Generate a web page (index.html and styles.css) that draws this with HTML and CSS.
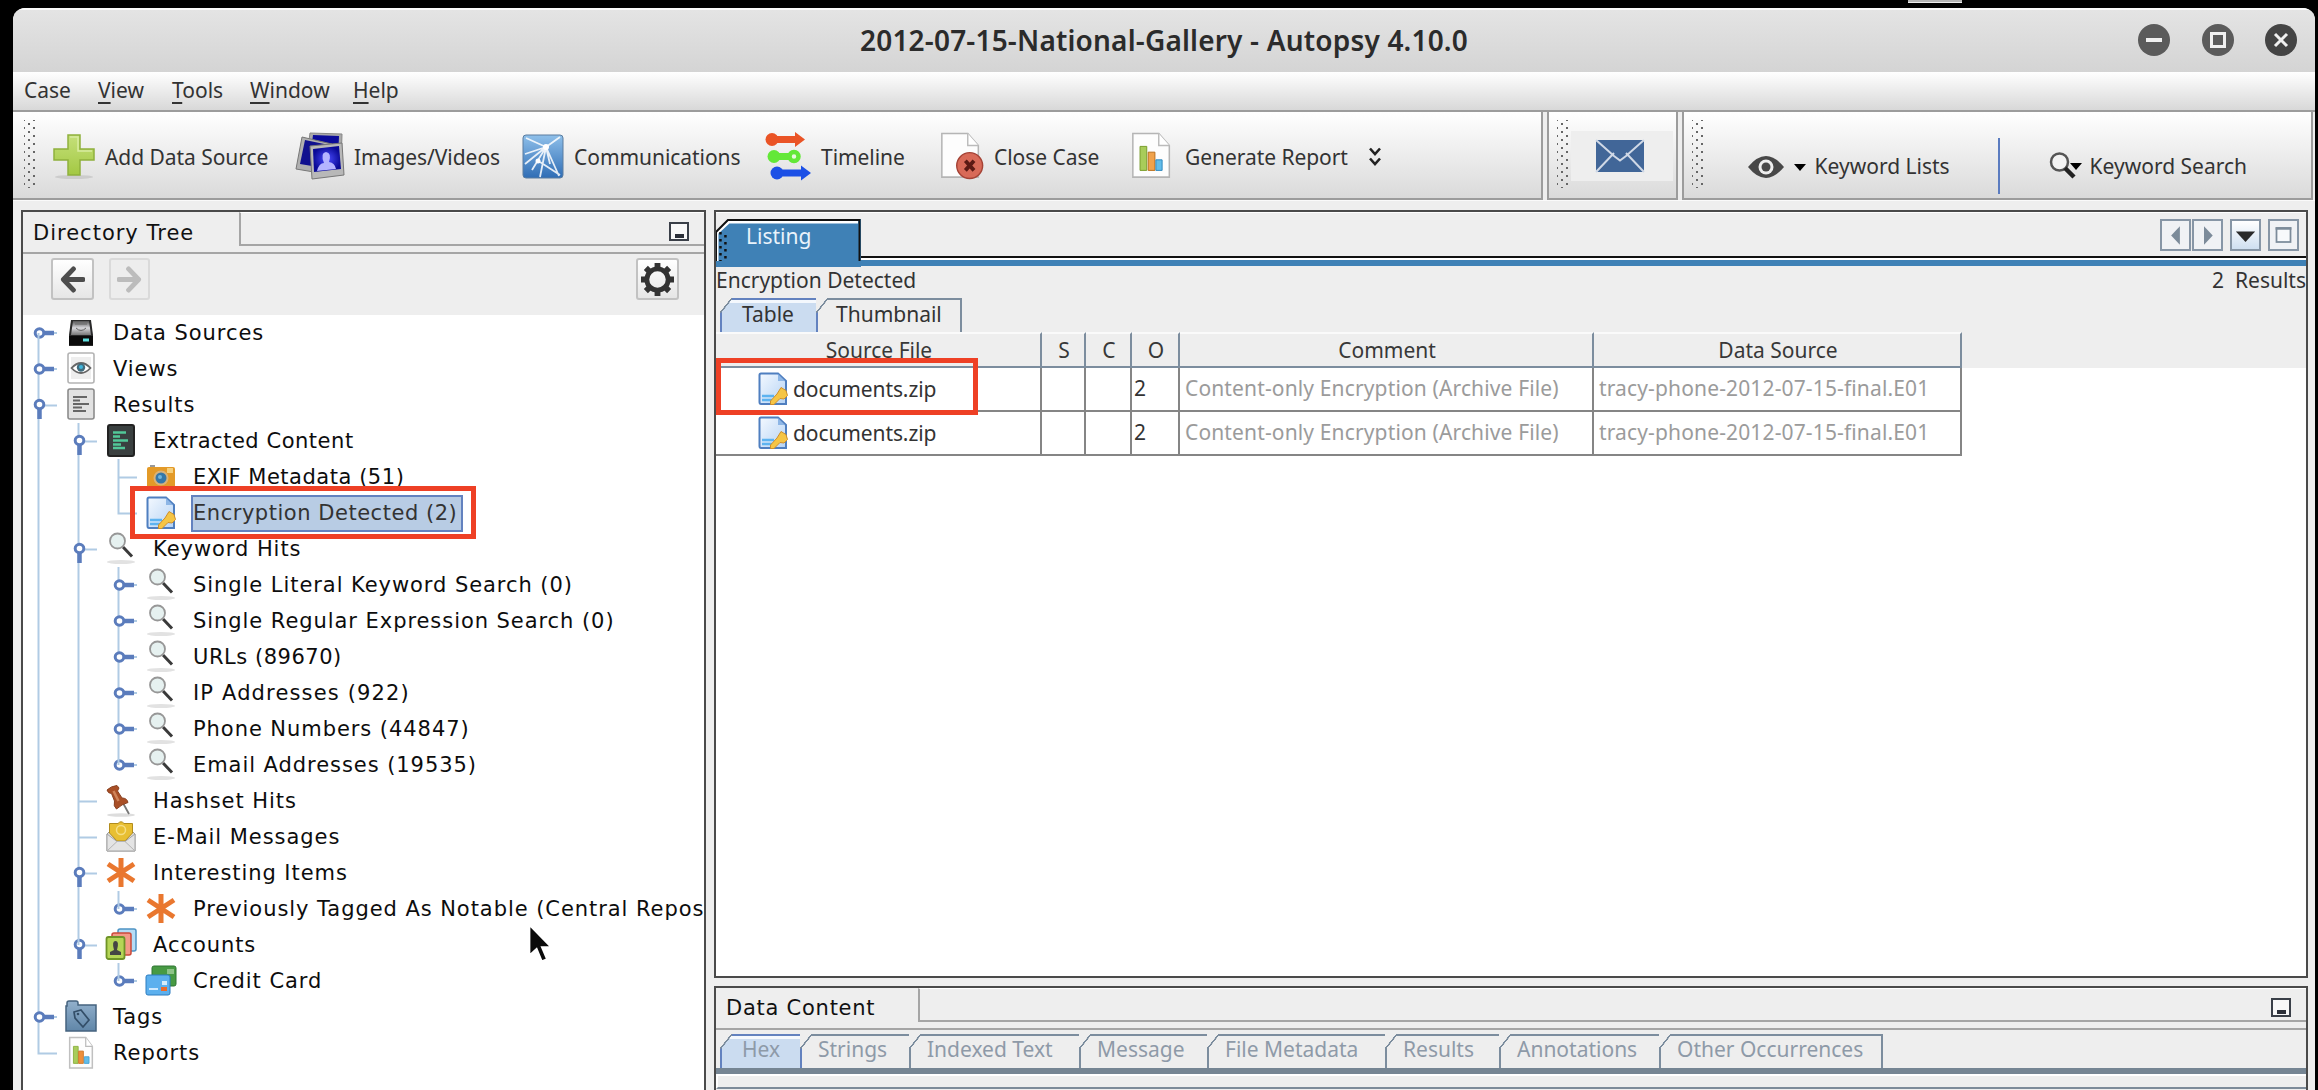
FILE: index.html
```html
<!DOCTYPE html>
<html lang="en">
<head>
<meta charset="utf-8">
<title>2012-07-15-National-Gallery - Autopsy 4.10.0</title>
<link rel="stylesheet" href="styles.css">
</head>
<body>
<svg class="defs" aria-hidden="true">
  <defs>
    <linearGradient id="gBlue" x1="0" y1="0" x2="1" y2="1"><stop offset="0" stop-color="#f4f9ff"/><stop offset="1" stop-color="#b4d2f4"/></linearGradient>
    <linearGradient id="gPlus" x1="0" y1="0" x2="0" y2="1"><stop offset="0" stop-color="#c5e07a"/><stop offset="1" stop-color="#a3c843"/></linearGradient>
    <linearGradient id="gComm" x1="0" y1="0" x2="0" y2="1"><stop offset="0" stop-color="#8fc0ea"/><stop offset="1" stop-color="#2f6db5"/></linearGradient>
    <linearGradient id="gFolder" x1="0" y1="0" x2="0" y2="1"><stop offset="0" stop-color="#92b0cc"/><stop offset="1" stop-color="#6086a8"/></linearGradient>
    <radialGradient id="gPic"><stop offset="0" stop-color="#4a4cff"/><stop offset="1" stop-color="#0a0a96"/></radialGradient>
    <linearGradient id="gDisk" x1="0" y1="0" x2="0" y2="1"><stop offset="0" stop-color="#555"/><stop offset=".5" stop-color="#d8d8dc"/><stop offset="1" stop-color="#777"/></linearGradient>
  </defs>
  <symbol id="g-line" viewBox="0 0 40 36" preserveAspectRatio="none"><path class="guide" d="M15.5 0V36"/></symbol>
  <symbol id="g-tee" viewBox="0 0 40 36" preserveAspectRatio="none"><path class="guide" d="M15.5 0V36M15.5 18.500H34"/></symbol>
  <symbol id="g-end" viewBox="0 0 40 36" preserveAspectRatio="none"><path class="guide" d="M15.500 0V18.500H34"/></symbol>
  <symbol id="g-closed" viewBox="0 0 40 36"><path class="guide" d="M28 18H34"/><path class="knob" d="M21 18H31"/><circle class="ring" cx="16.500" cy="18" r="4.300"/></symbol>
  <symbol id="g-open" viewBox="0 0 40 36"><path class="guide" d="M22 18.500H34"/><path class="knob" d="M16.500 22V32"/><circle class="ring" cx="16.500" cy="17.500" r="4.300"/></symbol>
  <symbol id="i-disk" viewBox="0 0 32 34"><path d="M6 4H26L28 19V30H4V19Z" fill="#2a2a2a"/><path d="M8 5H24L26 19H6Z" fill="url(#gDisk)"/><path d="M10 8H22M11 12q5 5 10 0" stroke="#666" fill="none"/><path d="M4 20H28V29H4Z" fill="#0b0b0b"/><path d="M18 24h6" stroke="#5fe0e0" stroke-width="3"/></symbol>
  <symbol id="i-views" viewBox="0 0 32 34"><rect x="3" y="1" width="26" height="30" rx="2" fill="#fff" stroke="#b4b4b4" stroke-width="1.600"/><rect x="6" y="5" width="20" height="22" fill="#eee"/><path d="M6.500 16Q16 6 25.500 16Q16 26 6.500 16Z" fill="#fff" stroke="#666" stroke-width="1.800"/><circle cx="16" cy="15.500" r="4.200" fill="#426b7c"/><circle cx="16" cy="15" r="2" fill="#3fb6dc"/></symbol>
  <symbol id="i-results" viewBox="0 0 32 34"><rect x="3" y="1" width="26" height="30" rx="2" fill="#e2e2e2" stroke="#8c8c8c" stroke-width="1.600"/><path d="M8 9H22M8 12.500H15M8 16H24M8 19.500H17M8 23H21" stroke="#666" stroke-width="2.200"/></symbol>
  <symbol id="i-extract" viewBox="0 0 32 34"><rect x="3" y="1" width="26" height="31" rx="2" fill="#3a4040" stroke="#222" stroke-width="2"/><path d="M8 8.500H21M8 12.500H15M8 16.500H23M8 20.500H16M8 24H20" stroke="#52c898" stroke-width="2.400"/></symbol>
  <symbol id="i-exif" viewBox="0 0 32 34"><path d="M5 8V5h5v3" fill="#999"/><rect x="2" y="7" width="28" height="22" rx="2" fill="#e39a28"/><rect x="22" y="8" width="6" height="5" fill="#f5cf7c"/><circle cx="16" cy="18" r="7.500" fill="#d9b27a"/><circle cx="16" cy="18" r="5.500" fill="#3577a8"/><circle cx="15" cy="17" r="2" fill="#70b5dc"/></symbol>
  <symbol id="i-enc" viewBox="0 0 32 34"><path d="M4 1.500H21L29 9V32H4Q2.500 32 2.500 30V3Q2.500 1.500 4 1.500Z" fill="url(#gBlue)" stroke="#4f7fc0" stroke-width="2"/><path d="M21 2V9H28" fill="#8db6e6"/><path d="M5 24H17M5 28H15" stroke="#5db3f0" stroke-width="2.500"/><path d="M24 15.500l5 3 1.500 5-3.500 3.500-4-.5-6 6h-3.500v-3.500l6.500-7z" fill="#f5c545" stroke="#cf8f2a" stroke-width="1"/></symbol>
  <symbol id="i-mag" viewBox="0 0 32 34"><ellipse cx="16" cy="30" rx="14" ry="2" fill="#e2e2e2"/><path d="M18 15L27 24.500" stroke="#3a3a3a" stroke-width="3"/><circle cx="12.500" cy="9" r="7.500" fill="#e6f1f0" stroke="#979797" stroke-width="1.800"/></symbol>
  <symbol id="i-pin" viewBox="0 0 32 34"><ellipse cx="16" cy="31" rx="14" ry="1.800" fill="#ddd"/><path d="M18 19L24 30" stroke="#777" stroke-width="1.800"/><path d="M2 6Q6 2 12 1.500L14 4 12.500 7 17 14Q22 14 23 18.500Q17 20 11.500 25Q8 22 9.500 17L6.500 9.500Q3 9.500 2 6Z" fill="#a94f26" stroke="#8a4222"/><path d="M8.500 7l5 10" stroke="#d0845a" stroke-width="2.500"/></symbol>
  <symbol id="i-mail" viewBox="0 0 32 34"><path d="M2 14L6 10H26L30 14V31H2Z" fill="#dcdcdc" stroke="#999"/><path d="M4.500 3.500H13Q16 0 19 3.500H27.500V13L20 21H12L4.500 13Z" fill="#e8bf33" stroke="#b28c1c"/><circle cx="16" cy="10" r="4.500" fill="none" stroke="#f5de84" stroke-width="1.500"/><path d="M2 14L12 21.500H20L30 14V31H2Z" fill="#e4e4e4" stroke="#a5a5a5"/><path d="M2.500 30.500L12 21.500H20L29.500 30.500" fill="none" stroke="#b5b5b5"/></symbol>
  <symbol id="i-star" viewBox="0 0 32 34"><path d="M16 2V31M3 8L29 25M29 8L3 25" stroke="#e9772f" stroke-width="5"/></symbol>
  <symbol id="i-accounts" viewBox="0 0 32 34"><rect x="13" y="1" width="18" height="22" rx="2" fill="#b5dcf5" stroke="#4d93c4" stroke-width="1.500"/><rect x="7" y="5" width="19" height="22" rx="2" fill="#f39a87" stroke="#cb4a3a" stroke-width="1.500"/><rect x="1.500" y="9" width="18" height="22" rx="2" fill="#b5d556" stroke="#6f9427" stroke-width="1.800"/><path d="M5 27V24L9 22Q6.500 13 10.500 13Q14.500 13 12 22L16 24V27Z" fill="#444"/></symbol>
  <symbol id="i-card" viewBox="0 0 32 34"><rect x="7" y="2" width="24" height="20" rx="2" fill="#479a43" stroke="#2f7533"/><path d="M22 5h7v5h-7z" fill="#8ec488"/><rect x="1" y="11" width="24" height="20" rx="2" fill="#5cb0ee" stroke="#2c7cc0"/><path d="M4 25h9" stroke="#cfeaff" stroke-width="2"/><path d="M17 17h5v4h-5z" fill="#d4ecfa"/><path d="M16 23h6v4h-6z" fill="#eb6a2a"/></symbol>
  <symbol id="i-tags" viewBox="0 0 32 34"><path d="M2 6V3Q2 1 4 1H11Q13 1 13 3V5H31V31H1V6Z" fill="url(#gFolder)" stroke="#45637f" stroke-width="1.500"/><path d="M9 12l7-2 8 10-6 7-8-9z" fill="none" stroke="#334e68" stroke-width="1.700"/><circle cx="13" cy="14" r="1.300" fill="#334e68"/></symbol>
  <symbol id="i-report" viewBox="0 0 32 36"><path d="M4 1.500H21L28 11V34H4Z" fill="#fdfdfd" stroke="#c0c0c0" stroke-width="1.600"/><path d="M21 1.500V11H28" fill="#fff" stroke="#bbb" stroke-width="1.300"/><path d="M8 11h5v18H8z" fill="#a8cc5a" stroke="#8db143"/><path d="M13.500 16h5v13h-5z" fill="#ee8f3c" stroke="#d07a2a"/><path d="M19.500 22h5v7h-5z" fill="#62bdea" stroke="#4aa5d4"/></symbol>
</svg>

<div class="desktop">
<i class="stray"></i>
<div class="window">
  <header class="titlebar">
    <h1>2012-07-15-National-Gallery - Autopsy 4.10.0</h1>
    <div class="winbtns">
      <svg viewBox="0 0 32 32"><circle cx="16" cy="16" r="16" fill="#5b5b5b"/><path d="M8 16H24" stroke="#f0f0f0" stroke-width="4"/></svg>
      <svg viewBox="0 0 32 32"><circle cx="16" cy="16" r="16" fill="#5b5b5b"/><rect x="9.500" y="9.500" width="13" height="13" fill="none" stroke="#f0f0f0" stroke-width="3"/></svg>
      <svg viewBox="0 0 32 32"><circle cx="16" cy="16" r="16" fill="#444"/><path d="M10 10L22 22M22 10L10 22" stroke="#f0f0f0" stroke-width="3"/></svg>
    </div>
  </header>
  <nav class="menubar"><span style="width:74px">Case</span><span style="width:74px"><u>V</u>iew</span><span style="width:78px"><u>T</u>ools</span><span style="width:103px"><u>W</u>indow</span><span><u>H</u>elp</span></nav>

  <div class="toolbars">
    <div class="bar bar-main">
      <i class="grip"></i>
      <div class="tool" style="width:243px"><svg class="ic" style="width:42px" viewBox="0 0 42 48"><ellipse cx="21" cy="45" rx="19" ry="2" fill="#ccc"/><path d="M15 3H27V17H41V28H27V43H15V28H1V17H15Z" fill="url(#gPlus)" stroke="#8fb03c" stroke-width="1.500"/><path d="M17 5H25V19H39" fill="none" stroke="#d8ecA0" stroke-width="1.500"/></svg><span class="lb">Add Data Source</span></div>
      <div class="tool" style="width:226px"><svg class="ic" style="width:48px" viewBox="0 0 48 48"><path d="M14 1L46 2 45 34 10 30Z" fill="#aaa" stroke="#888"/><path d="M17 3L43 4 42 28 14 26Z" fill="#0b0b9a"/><path d="M6 5L36 12 30 42 0 37Z" fill="#b0b0b0" stroke="#777"/><path d="M9 8L33 13 28 36 4 32Z" fill="#10108f"/><path d="M14 14L46 11 48 43 16 47Z" fill="#b8b8b8" stroke="#777"/><path d="M17 17L43 14 45 37 18 40Z" fill="url(#gPic)"/><path d="M21 39Q23 31 28 31Q24 21 30 20Q36 21 33 30Q39 31 40 37Z" fill="#b4b4ff"/></svg><span class="lb">Images/Videos</span></div>
      <div class="tool" style="width:243px"><svg class="ic" style="width:42px" viewBox="0 0 42 48"><rect x="1" y="3" width="40" height="43" rx="3" fill="url(#gComm)" stroke="#5a7da0"/><path d="M24 15L4 6M24 15L38 5M24 15L3 32M24 15L18 45M3 22L24 15 37 44M18 30L38 43M10 38L24 15L28 32" fill="none" stroke="#fff" stroke-width="1.800" opacity=".85"/><circle cx="24" cy="15" r="3" fill="#fff"/><circle cx="16" cy="29" r="2.500" fill="#fff"/></svg><span class="lb">Communications</span></div>
      <div class="tool" style="width:175px"><svg class="ic" style="width:46px" viewBox="0 0 46 48"><g stroke-width="7"><path d="M6 7.500H32" stroke="#ea5426"/><circle cx="7" cy="7.500" r="6.500" fill="#ea5426"/><path d="M30 0l10 7.500-10 7.500z" fill="#ea5426"/><path d="M9 24.500H26" stroke="#63e838"/><circle cx="9" cy="24.500" r="6.500" fill="#63e838"/><circle cx="29" cy="24.500" r="4.500" fill="#e8f8e0" stroke="#63e838" stroke-width="4.500"/><path d="M12 41H38" stroke="#1c50e6"/><circle cx="12" cy="41" r="6.500" fill="#1c50e6"/><path d="M36 33.500l10 7.500-10 7.500z" fill="#1c50e6"/></g></svg><span class="lb">Timeline</span></div>
      <div class="tool" style="width:191px"><svg class="ic" style="width:44px" viewBox="0 0 44 50"><path d="M1 1.500H28L39 14V47H1Z" fill="#fdfdfd" stroke="#b5b5b5" stroke-width="1.600"/><path d="M28 1.500V14H39" fill="#fff" stroke="#bbb" stroke-width="1.500"/><circle cx="30" cy="35" r="13.500" fill="#d86a58" stroke="#a54336" stroke-width="1.500"/><path d="M25.500 30L34.500 40M34.500 30L25.500 40" stroke="#5c1a14" stroke-width="4"/></svg><span class="lb">Close Case</span></div>
      <div class="tool"><svg class="ic" style="width:44px" viewBox="0 0 44 50"><path d="M1 1.500H28L39 14V47H1Z" fill="#fdfdfd" stroke="#b5b5b5" stroke-width="1.600"/><path d="M28 1.500V14H39" fill="#fff" stroke="#bbb" stroke-width="1.500"/><path d="M8.500 15h7v25h-7z" fill="#a8cc5a" stroke="#769c28"/><path d="M17 21h7v19h-7z" fill="#f0a24c" stroke="#b86d1a"/><path d="M25 29h6.500v11h-6.500z" fill="#62bdea" stroke="#2d87bd"/></svg><span class="lb">Generate Report</span></div>
      <svg class="chev" viewBox="0 0 14 20"><path d="M2 1.500L7 7 12 1.500M2 11.500L7 17 12 11.500" fill="none" stroke="#222" stroke-width="2.600"/></svg>
    </div>
    <div class="bar bar-mail"><i class="grip"></i><div class="mailbtn"><svg width="50" height="34" viewBox="0 0 50 34"><rect x="1" y="1" width="48" height="32" rx="2" fill="#416698"/><path d="M1 1L19 17 25 21.500 31 17 49 1M1 33L19 14M49 33L31 14" fill="none" stroke="#cfd8e6" stroke-width="2"/></svg></div></div>
    <div class="bar bar-kw"><i class="grip"></i>
      <svg class="eye" viewBox="0 0 36 22"><path d="M0 11Q18 -11 36 11Q18 33 0 11Z" fill="#484848"/><circle cx="18" cy="11" r="7.500" fill="#eee"/><circle cx="18" cy="11" r="4.500" fill="#484848"/></svg>
      <i class="caret"></i><span class="lb kl">Keyword Lists</span><i class="vsep"></i>
      <svg class="srch" viewBox="0 0 34 28"><circle cx="10.500" cy="11" r="8.500" fill="#f3f3f3" stroke="#555" stroke-width="2.500"/><path d="M16 17L25 26" stroke="#222" stroke-width="4.500"/><path d="M21 12H33L27 19Z" fill="#000"/></svg>
      <span class="lb ks">Keyword Search</span>
    </div>
  </div>

  <main class="work">
    <section class="panel left">
      <div class="phead"><div class="ptitle">Directory Tree</div><div class="pfill"><i class="minbtn"></i></div></div>
      <div class="ptools">
        <button class="btn"><svg viewBox="0 0 26 28"><path d="M24 14H4M14 3L3.500 14 14 25" fill="none" stroke="#4d4d4d" stroke-width="5" stroke-linecap="round" stroke-linejoin="round"/></svg></button>
        <button class="btn off"><svg viewBox="0 0 26 28"><path d="M2 14H22M12 3L22.500 14 12 25" fill="none" stroke="#bcbcbc" stroke-width="5" stroke-linecap="round" stroke-linejoin="round"/></svg></button>
        <button class="btn gear"><svg viewBox="0 0 34 34"><circle cx="17" cy="17" r="11" fill="none" stroke="#333" stroke-width="5"/><path d="M17 0V6M17 28V34M0 17H6M28 17H34M5 5L9 9M25 25L29 29M29 5L25 9M9 25L5 29" stroke="#333" stroke-width="6"/></svg></button>
      </div>
      <div class="tree">
        <div class="row first"><span class="g"><svg class="half low"><use href="#g-line"/></svg><svg><use href="#g-closed"/></svg></span><svg class="ti"><use href="#i-disk"/></svg><b>Data Sources</b></div>
        <div class="row"><span class="g"><svg><use href="#g-line"/></svg><svg><use href="#g-closed"/></svg></span><svg class="ti"><use href="#i-views"/></svg><b>Views</b></div>
        <div class="row"><span class="g"><svg><use href="#g-line"/></svg><svg><use href="#g-open"/></svg></span><svg class="ti"><use href="#i-results"/></svg><b>Results</b></div>
        <div class="row"><span class="g"><svg><use href="#g-line"/></svg></span><span class="g"><svg><use href="#g-line"/></svg><svg><use href="#g-open"/></svg></span><svg class="ti"><use href="#i-extract"/></svg><b class="tight">Extracted Content</b></div>
        <div class="row"><span class="g"><svg><use href="#g-line"/></svg></span><span class="g"><svg><use href="#g-line"/></svg></span><span class="g"><svg><use href="#g-tee"/></svg></span><svg class="ti"><use href="#i-exif"/></svg><b class="tight">EXIF Metadata (51)</b></div>
        <div class="row"><span class="g"><svg><use href="#g-line"/></svg></span><span class="g"><svg><use href="#g-line"/></svg></span><span class="g"><svg><use href="#g-end"/></svg></span><svg class="ti"><use href="#i-enc"/></svg><b class="sel tight">Encryption Detected (2)</b></div>
        <div class="row"><span class="g"><svg><use href="#g-line"/></svg></span><span class="g"><svg><use href="#g-line"/></svg><svg><use href="#g-open"/></svg></span><svg class="ti"><use href="#i-mag"/></svg><b>Keyword Hits</b></div>
        <div class="row"><span class="g"><svg><use href="#g-line"/></svg></span><span class="g"><svg><use href="#g-line"/></svg></span><span class="g"><svg><use href="#g-line"/></svg><svg><use href="#g-closed"/></svg></span><svg class="ti"><use href="#i-mag"/></svg><b>Single Literal Keyword Search (0)</b></div>
        <div class="row"><span class="g"><svg><use href="#g-line"/></svg></span><span class="g"><svg><use href="#g-line"/></svg></span><span class="g"><svg><use href="#g-line"/></svg><svg><use href="#g-closed"/></svg></span><svg class="ti"><use href="#i-mag"/></svg><b>Single Regular Expression Search (0)</b></div>
        <div class="row"><span class="g"><svg><use href="#g-line"/></svg></span><span class="g"><svg><use href="#g-line"/></svg></span><span class="g"><svg><use href="#g-line"/></svg><svg><use href="#g-closed"/></svg></span><svg class="ti"><use href="#i-mag"/></svg><b class="tight">URLs (89670)</b></div>
        <div class="row"><span class="g"><svg><use href="#g-line"/></svg></span><span class="g"><svg><use href="#g-line"/></svg></span><span class="g"><svg><use href="#g-line"/></svg><svg><use href="#g-closed"/></svg></span><svg class="ti"><use href="#i-mag"/></svg><b class="wide">IP Addresses (922)</b></div>
        <div class="row"><span class="g"><svg><use href="#g-line"/></svg></span><span class="g"><svg><use href="#g-line"/></svg></span><span class="g"><svg><use href="#g-line"/></svg><svg><use href="#g-closed"/></svg></span><svg class="ti"><use href="#i-mag"/></svg><b>Phone Numbers (44847)</b></div>
        <div class="row"><span class="g"><svg><use href="#g-line"/></svg></span><span class="g"><svg><use href="#g-line"/></svg></span><span class="g"><svg class="half"><use href="#g-line"/></svg><svg><use href="#g-closed"/></svg></span><svg class="ti"><use href="#i-mag"/></svg><b>Email Addresses (19535)</b></div>
        <div class="row"><span class="g"><svg><use href="#g-line"/></svg></span><span class="g"><svg><use href="#g-tee"/></svg></span><svg class="ti"><use href="#i-pin"/></svg><b>Hashset Hits</b></div>
        <div class="row"><span class="g"><svg><use href="#g-line"/></svg></span><span class="g"><svg><use href="#g-tee"/></svg></span><svg class="ti"><use href="#i-mail"/></svg><b>E-Mail Messages</b></div>
        <div class="row"><span class="g"><svg><use href="#g-line"/></svg></span><span class="g"><svg><use href="#g-line"/></svg><svg><use href="#g-open"/></svg></span><svg class="ti"><use href="#i-star"/></svg><b>Interesting Items</b></div>
        <div class="row"><span class="g"><svg><use href="#g-line"/></svg></span><span class="g"><svg><use href="#g-line"/></svg></span><span class="g"><svg class="half"><use href="#g-line"/></svg><svg><use href="#g-closed"/></svg></span><svg class="ti"><use href="#i-star"/></svg><b>Previously Tagged As Notable (Central Repos</b></div>
        <div class="row"><span class="g"><svg><use href="#g-line"/></svg></span><span class="g"><svg class="half"><use href="#g-line"/></svg><svg><use href="#g-open"/></svg></span><svg class="ti"><use href="#i-accounts"/></svg><b>Accounts</b></div>
        <div class="row"><span class="g"><svg><use href="#g-line"/></svg></span><span class="g"></span><span class="g"><svg class="half"><use href="#g-line"/></svg><svg><use href="#g-closed"/></svg></span><svg class="ti"><use href="#i-card"/></svg><b>Credit Card</b></div>
        <div class="row"><span class="g"><svg><use href="#g-line"/></svg><svg><use href="#g-closed"/></svg></span><svg class="ti"><use href="#i-tags"/></svg><b>Tags</b></div>
        <div class="row"><span class="g"><svg><use href="#g-end"/></svg></span><svg class="ti"><use href="#i-report"/></svg><b>Reports</b></div>
      </div>
    </section>

    <div class="rightcol">
      <section class="panel listing">
        <div class="ltabs">
          <div class="ltab"><svg viewBox="0 0 146 48" preserveAspectRatio="none"><path d="M0 48V13L12 0H146V48Z" fill="#3f81b6"/><path d="M0 0H12L0 13Z" fill="#eee"/><path d="M1 42V14L13 3H143" fill="none" stroke="#fff" stroke-width="3"/><path d="M0 42V13L12 1H144.500V42" fill="none" stroke="#111" stroke-width="2"/><path d="M4.500 13V42M9.500 16V40" stroke="#111" stroke-width="2.500" stroke-dasharray="2.500 4.500"/></svg><span>Listing</span></div>
          <div class="lfill">
            <i class="nb"><svg viewBox="0 0 30 32"><path d="M20 6V27L10 16.500Z" fill="#7c8b9a"/></svg></i><i class="nb"><svg viewBox="0 0 30 32"><path d="M11 6V27L21 16.500Z" fill="#7c8b9a"/></svg></i><i class="nb dd"><svg viewBox="0 0 30 32"><path d="M4 12H26L15 24Z" fill="#2a2a2a"/></svg></i><i class="nb mx"><svg viewBox="0 0 30 32"><rect x="7" y="8" width="16" height="16" fill="#f7f9fb" stroke="#7c8b9a" stroke-width="2"/><path d="M6 8.500H24" stroke="#7c8b9a" stroke-width="3"/></svg></i>
          </div>
        </div>
        <div class="strip"></div>
        <div class="info"><span>Encryption Detected</span><span class="cnt">2&nbsp; Results</span></div>
        <div class="tabs up">
          <div class="tab on" style="width:98px"><span>Table</span></div><div class="tab" style="width:144px"><span style="padding-left:18px">Thumbnail</span></div>
        </div>
        <div class="tbl head"><div>Source File</div><div>S</div><div>C</div><div>O</div><div>Comment</div><div>Data Source</div></div>
        <div class="tbl"><div class="file"><svg class="ti"><use href="#i-enc"/></svg>documents.zip</div><div></div><div></div><div class="o">2</div><div class="dim cm">Content-only Encryption (Archive File)</div><div class="dim ds">tracy-phone-2012-07-15-final.E01</div></div>
        <div class="tbl"><div class="file"><svg class="ti"><use href="#i-enc"/></svg>documents.zip</div><div></div><div></div><div class="o">2</div><div class="dim cm">Content-only Encryption (Archive File)</div><div class="dim ds">tracy-phone-2012-07-15-final.E01</div></div>
      </section>
      <section class="panel content">
        <div class="phead"><div class="ptitle">Data Content</div><div class="pfill"><i class="minbtn"></i></div></div>
        <div class="tabs down">
          <div class="tab on" style="width:82px"><span>Hex</span></div><div class="tab" style="width:109px"><span>Strings</span></div><div class="tab" style="width:170px"><span>Indexed Text</span></div><div class="tab" style="width:128px"><span>Message</span></div><div class="tab" style="width:178px"><span>File Metadata</span></div><div class="tab" style="width:114px"><span>Results</span></div><div class="tab" style="width:160px"><span>Annotations</span></div><div class="tab" style="width:222px"><span>Other Occurrences</span></div>
        </div>
        <div class="slate"></div><div class="inner"></div>
      </section>
    </div>
  </main>
</div>
<i class="mark m1"></i><i class="mark m2"></i>
<svg class="cursor" viewBox="0 0 24 38"><path d="M2 2V30L8.500 24 13 35 18 33 13.500 22.500H22Z" fill="#0a0a0a" stroke="#fff" stroke-width="2"/></svg>
</div>
</body>
</html>
```
FILE: styles.css
```css
* { box-sizing: border-box; }
body { margin: 0; background: #000; font-family: "Noto Sans", sans-serif; font-size: 21px; color: #333; }
i { font-style: normal; }
b { font-weight: 400; }
svg { display: block; }
.defs { position: absolute; width: 0; height: 0; }
.desktop { position: relative; width: 2318px; height: 1090px; padding: 8px 3px 0 13px; overflow: hidden; white-space: nowrap; }
.stray { position: absolute; left: 1908px; top: 0; width: 54px; height: 3px; background: #b5b5b5; border-bottom: 1px solid #eee; }
.window { height: 1082px; display: flex; flex-direction: column; background: #eee; border-radius: 12px 12px 0 0; overflow: hidden; }

.titlebar { flex: none; position: relative; height: 64px; display: flex; align-items: center; justify-content: center; padding-bottom: 2px; background: linear-gradient(#e4e4e4, #d4d4d4); border-top: 2px solid #fafafa; }
h1 { margin: 0; font-size: 28px; font-weight: 600; letter-spacing: .18px; color: #2b2b2b; }
.winbtns { position: absolute; right: 18px; top: 14px; display: flex; gap: 31.500px; }
.winbtns svg { width: 32px; height: 32px; }
.menubar { flex: none; height: 40px; padding-left: 11px; display: flex; align-items: center; line-height: 37px; background: linear-gradient(#fff, #d8d8d8); border-bottom: 2px solid #9c9c9c; }
.menubar span { padding-bottom: 1px; }
u { text-underline-offset: 4px; text-decoration-thickness: 2px; text-decoration-skip-ink: none; }

.toolbars { flex: none; height: 88px; display: flex; gap: 4px; padding-right: 2px; }
.bar { height: 88px; display: flex; align-items: center; padding-bottom: 2px; border: solid #9c9c9c; border-width: 0 2px 2px; background: linear-gradient(#fff, #dadada); }
.bar-main { width: 1531px; border-left-width: 0; }
.bar-mail { width: 131px; }
.bar-kw { width: 632px; }
.grip { flex: none; width: 12px; height: 68px; margin-left: 8px; background: radial-gradient(circle, #666 1.100px, transparent 1.500px) 0 0 / 10px 8px, radial-gradient(circle, #666 1.100px, transparent 1.500px) 5px 4px / 10px 8px; }
.bar-main .grip { margin: 0 17px 0 11px; }
.tool { flex: none; display: flex; align-items: center; padding-top: 4px; letter-spacing: -.05px; }
.ic { height: 48px; flex: none; margin-right: 10px; overflow: visible; }
.lb { padding-top: 1px; }
.chev { width: 14px; height: 20px; margin: 5px 0 0 20px; }
.mailbtn { width: 102px; height: 50px; margin: 4px 0 0 2px; display: flex; align-items: center; justify-content: center; background: #eee; padding-right: 4px; }
.eye { width: 36px; height: 22px; margin: 26px 0 0 44px; }
.caret { border: 6px solid transparent; border-top: 7px solid #000; border-bottom: 0; margin: 26px 9px 0 10px; }
.kl { width: 183px; margin-top: 23px; }
.vsep { width: 2px; height: 56px; background: #5b7cc0; margin-top: 24px; }
.srch { width: 34px; height: 28px; margin: 22px 7px 0 49px; }
.ks { margin-top: 23px; }

.work { flex: 1; min-height: 0; display: flex; gap: 8px; padding: 9px 7px 0 8px; border-top: 1px solid #fafafa; }
.panel { border: 2px solid #4a4a4a; overflow: hidden; display: flex; flex-direction: column; background: #eee; }
.left { width: 685px; flex: none; border-bottom: 0; color: #111; }
.left, .content .ptitle { font-family: "DejaVu Sans", sans-serif; }
.phead { flex: none; display: flex; height: 42px; border-bottom: 2px solid #a5a5a5; }
.ptitle { width: 216px; height: 40px; padding-left: 10px; line-height: 42px; letter-spacing: 1px; color: #111; }
.pfill { flex: 1; height: 34px; border-left: 2px solid #a5a5a5; border-bottom: 2px solid #a5a5a5; display: flex; justify-content: flex-end; padding: 9px 15px 0 0; border-top: 1px solid #fff; }
.minbtn { width: 20px; height: 19px; border: 2px solid #3a3f48; background: linear-gradient(#2b2f38, #2b2f38) 4px 10px / 9px 4px no-repeat #f8f8f8; }
.ptools { flex: none; height: 61px; display: flex; padding: 4px 25px 0 28px; }
.btn { width: 43px; height: 42px; padding: 0; margin-right: 15px; display: grid; place-items: center; border: 2px solid #c2c2c2; border-radius: 3px; background: linear-gradient(#fff, #e6e6e6); }
.btn svg { width: 25px; height: 27px; }
.btn.off { border-color: #dadada; background: #ededed; width: 41px; }
.btn.gear { margin: 0 0 0 auto; }
.btn.gear svg { width: 33px; height: 33px; }
.tree { flex: 1; background: #fff; color: #0d0d0d; letter-spacing: .94px; overflow: hidden; }
.tight { letter-spacing: .53px; }
.wide { letter-spacing: 1.150px; }
.row { height: 36px; display: flex; align-items: center; }
.g { flex: none; width: 40px; height: 100%; display: grid; }
.g svg { grid-area: 1 / 1; width: 40px; height: 100%; }
.g .half { clip-path: inset(0 0 50% 0); }
.g .half.low { clip-path: inset(50% 0 0 0); }
.guide { stroke: #b0cbe4; stroke-width: 2; fill: none; }
.knob { stroke: #5b7cbc; stroke-width: 4.500; }
.ring { stroke: #5b7cbc; stroke-width: 3; fill: #fff; }
.ti { flex: none; width: 32px; height: 34px; margin: 0 16px 0 2px; }
.sel { background: #b8cce4; outline: 2px solid #6382bf; outline-offset: 0; padding-right: 4px; height: 33px; line-height: 32px; color: #333; }

.rightcol { flex: 1; min-width: 0; display: flex; flex-direction: column; gap: 8px; }
.listing { height: 768px; background: #fff; }
.ltabs { flex: none; height: 46px; display: flex; background: #eee; padding-top: 6px; border-top: 1px solid #fff; }
.ltab { width: 143px; height: 42px; flex: none; position: relative; z-index: 1; display: grid; }
.ltab > * { grid-area: 1 / 1; }
.ltab svg { width: 145px; height: 48px; }
.ltab span { position: relative; padding-left: 30px; line-height: 35px; color: #eaf3fb; }
.lfill { flex: 1; display: flex; justify-content: flex-end; border-bottom: 2px solid #111; padding-right: 6px; height: 39px; }
.nb { width: 31px; height: 32px; border: 2px solid #8796a6; background: #f0f2f5; margin-right: 1px; }
.nb svg { width: 27px; height: 28px; }
.nb.dd { margin: 0 7px 0 6px; background: linear-gradient(#fff, #cfdff0); }
.strip { flex: none; height: 8px; background: #3f81b6; border-top: 2px solid #fff; position: relative; }
.info { flex: none; height: 32px; line-height: 29px; display: flex; justify-content: space-between; background: #eee; }
.tabs { flex: none; display: flex; background: #eee; padding-left: 4px; }
.tab { position: relative; height: 34px; line-height: 29px; border-top: 2px solid #7c8d9e; border-right: 2px solid #7c8d9e; }
.tab span { display: block; padding-left: 16px; }
.tab::before { content: ""; position: absolute; left: -2px; top: -2px; width: 12px; height: 15px; background: linear-gradient(to bottom right, #eee 46%, #7c8d9e 47%, #7c8d9e 54%, transparent 55%); }
.tab.on { background: #cbdcf0; border-color: #6382bf; border-left: 2px solid #6382bf; box-shadow: inset 0 3px #f4f8fd; }
.tab.on span { padding-left: 20px; }
.tbl { flex: none; display: grid; grid-template-columns: 326px 44px 46px 48px 414px 368px; height: 44px; line-height: 41px; }
.tbl > div { border-right: 2px solid #858585; border-bottom: 2px solid #858585; overflow: hidden; }
.tbl.head { height: 36px; text-align: center; background: #eee; padding-right: 344px; color: #383838; }
.tbl.head > div { border-color: #7c8d9e; border-top: 2px solid #fafafa; line-height: 33px; padding-left: 2px; }
.file { display: flex; align-items: center; padding-left: 39px; letter-spacing: -.1px; }
.file .ti { margin: 0 4px 0 2px; }
.o { padding-left: 2px; }
.dim { color: #9b9b9b; padding-left: 5px; letter-spacing: .14px; }
.content { flex: 1; border-bottom: 0; }
.content .ptitle { width: 202px; letter-spacing: .75px; line-height: 41px; }
.down { padding-top: 4px; color: #8e9aa8; }
.down .tab { line-height: 26px; }
.slate { flex: none; height: 7px; background: #758593; border-bottom: 1px solid #fff; }
.inner { flex: none; height: 14px; border-bottom: 2px solid #7d8b99; border-left: 2px solid #fff; border-top: 1px solid #fff; }
.mark { position: absolute; border: 5px solid #ee4025; }
.m1 { left: 130px; top: 486px; width: 346px; height: 53px; }
.m2 { left: 716px; top: 358px; width: 262px; height: 57px; }
.cursor { position: absolute; left: 527px; top: 922px; width: 27px; height: 43px; }
```
